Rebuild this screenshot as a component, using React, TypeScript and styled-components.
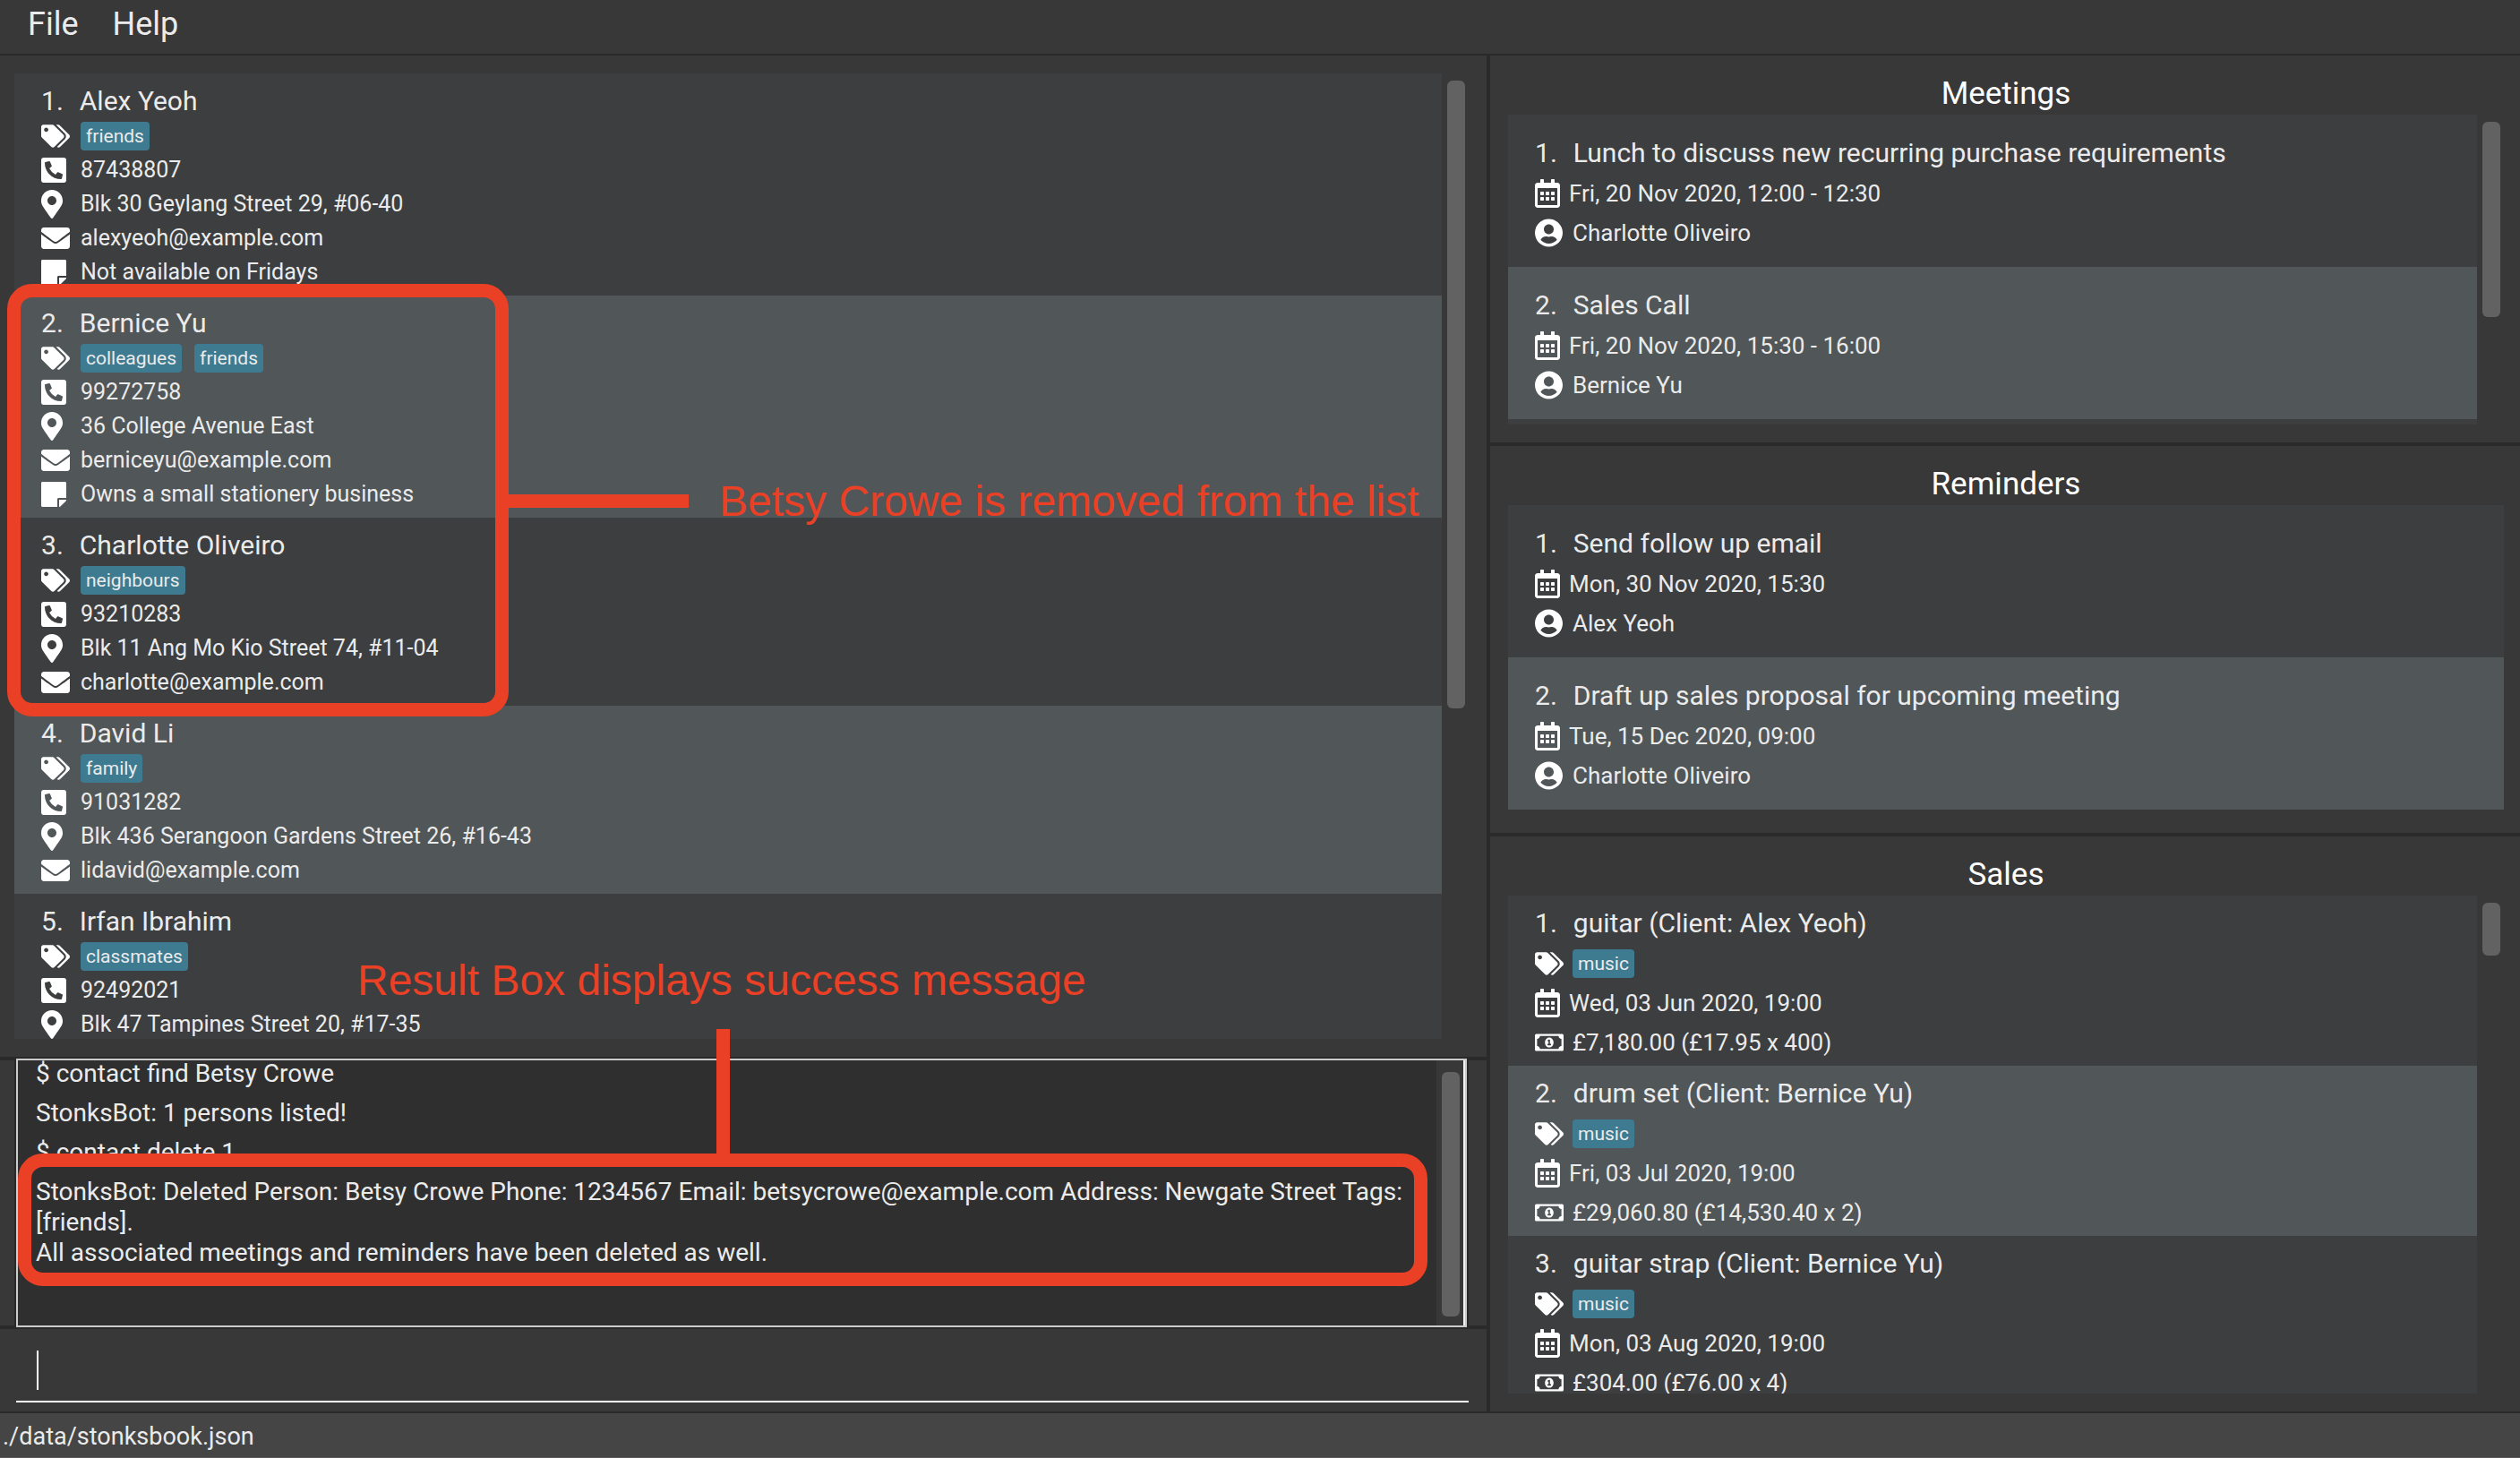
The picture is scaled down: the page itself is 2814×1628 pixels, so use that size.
import React from "react";
import styled, { createGlobalStyle } from "styled-components";
import type { IconType } from "react-icons";
import {
  FaEnvelope,
  FaMapMarkerAlt,
  FaPhoneSquareAlt,
  FaRegCalendarAlt,
  FaRegMoneyBillAlt,
  FaStickyNote,
  FaTags,
  FaUserCircle,
} from "react-icons/fa";

const color = {
  base: "#383838",
  divider: "#2a2a2a",
  cell: "#3c3e3f",
  cellAlt: "#515658",
  tag: "#3e7b91",
  thumb: "#626262",
  console: "#2f2f2f",
  consoleBorder: "#cbcccb",
  status: "#454545",
  text: "#ebebeb",
  note: "#ea4025",
};

const GlobalStyle = createGlobalStyle`
  *, *::before, *::after { box-sizing: border-box; }
  body { margin: 0; background: ${color.base}; }
  h2, p, ul { margin: 0; padding: 0; }
  ul { list-style: none; }
  button, input { font: inherit; color: inherit; }
`;

const Window = styled.div`
  position: relative;
  display: flex;
  flex-direction: column;
  height: 100vh;
  overflow: hidden;
  background: ${color.base};
  color: ${color.text};
  font-family: Roboto, "Liberation Sans", sans-serif;
  font-size: 26px;
`;

const MenuBar = styled.nav`
  display: flex;
  flex: none;
  height: 62px;
  padding: 0 12px 6px;
  border-bottom: 2px solid ${color.divider};
`;

const MenuButton = styled.button`
  padding: 0 19px;
  border: 0;
  background: none;
  font-size: 36px;
  line-height: 54px;
`;

const Workspace = styled.main`
  display: grid;
  flex: 1;
  min-height: 0;
  grid-template-columns: minmax(0, 1660fr) 4px minmax(0, 1150fr);
`;

const Divider = styled.div`
  background: ${color.divider};
`;

const ContactColumn = styled.div`
  display: grid;
  min-height: 0;
  grid-template-rows: minmax(0, 1fr) 4px 296px 4px 92px;
`;

const AgendaColumn = styled.div`
  display: grid;
  min-height: 0;
  grid-template-rows: minmax(0, 432fr) 4px minmax(0, 432fr) 4px minmax(0, 642fr);
`;

const Panel = styled.section<{ $left: number; $right: number }>`
  display: flex;
  flex-direction: column;
  min-height: 0;
  padding: 20px ${(p) => p.$right}px 20px ${(p) => p.$left}px;
`;

const PanelTitle = styled.h2`
  flex: none;
  color: #fff;
  font-size: 35px;
  font-weight: 400;
  line-height: 46px;
  text-align: center;
`;

const ListArea = styled.div`
  display: flex;
  flex: 1;
  min-height: 0;
`;

const List = styled.ul<{ $filled?: boolean }>`
  flex: 1;
  min-width: 0;
  overflow: hidden;
  background: ${(p) => (p.$filled ? color.cell : "transparent")};
`;

const Track = styled.div`
  flex: none;
  width: 30px;
  padding: 8px 4px 8px 6px;
`;

const Thumb = styled.div<{ $size: number }>`
  height: ${(p) => p.$size}%;
  border-radius: 6px;
  background: ${color.thumb};
`;

const Row = styled.li<{ $top: number; $bottom: number }>`
  padding: ${(p) => p.$top}px 20px ${(p) => p.$bottom}px 30px;
  background: ${color.cell};

  &:nth-child(even) {
    background: ${color.cellAlt};
  }
`;

const RowTitle = styled.div<{ $height: number }>`
  display: flex;
  gap: 18px;
  height: ${(p) => p.$height}px;
  font-size: 30px;
  line-height: ${(p) => p.$height}px;
  white-space: nowrap;
`;

const Field = styled.div<{ $height: number; $gap: number; $font: number }>`
  display: flex;
  align-items: center;
  gap: ${(p) => p.$gap}px;
  height: ${(p) => p.$height}px;
  font-size: ${(p) => p.$font}px;
  line-height: ${(p) => p.$height}px;
  white-space: nowrap;
`;

const IconSlot = styled.span<{ $width: number }>`
  display: flex;
  flex: none;
  color: #fff;

  svg {
    width: ${(p) => p.$width}px;
    height: 32px;
  }
`;

const Tags = styled.span`
  display: flex;
  gap: 14px;
`;

const Tag = styled.span`
  padding: 0 6px;
  border-radius: 4px;
  background: ${color.tag};
  font-size: 21px;
  line-height: 32px;
`;

const Console = styled.section`
  position: relative;
  display: flex;
  min-height: 0;
  margin: -2px 22px -2px 18px;
  border: 2px solid ${color.consoleBorder};
  box-shadow: 2px 0 ${color.divider}, -2px 0 ${color.divider};
  background: ${color.console};
`;

const Log = styled.div`
  display: flex;
  flex: 1;
  flex-direction: column;
  justify-content: flex-end;
  gap: 10px;
  min-width: 0;
  padding: 0 20px 64px;
  overflow: hidden;
  font-size: 28px;
  line-height: 34px;
`;

const LogEntry = styled.p`
  flex: none;
  white-space: pre-line;
`;

const ConsoleTrack = styled.div`
  flex: none;
  width: 32px;
  padding: 13px 4px 10px 6px;
  border-right: 2px solid #f2f2f2;
  background: ${color.base};
`;

const CommandArea = styled.form`
  padding: 0 20px 10px 18px;
`;

const CommandBox = styled.div`
  display: flex;
  align-items: center;
  height: 100%;
  padding: 12px 0 0 23px;
  border-bottom: 2px solid #fff;
`;

const Caret = styled.span`
  flex: none;
  width: 2px;
  height: 44px;
  background: #fff;
`;

const CommandInput = styled.input`
  flex: 1;
  min-width: 0;
  height: 44px;
  padding: 0;
  border: 0;
  outline: 0;
  background: none;
  font-size: 28px;
`;

const StatusBar = styled.footer`
  flex: none;
  height: 52px;
  padding: 1px 3px 0;
  border-top: 2px solid ${color.divider};
  border-bottom: 1px solid #5a5758;
  background: ${color.status};
  font-size: 27px;
  line-height: 50px;
`;

const Annotations = styled.div`
  position: absolute;
  inset: 0;
  pointer-events: none;
  color: ${color.note};
  font-family: "Liberation Sans", Arial, sans-serif;
  font-size: 48px;
  line-height: 56px;
  white-space: nowrap;
`;

type Place = { $x: number; $y: number };

const Outline = styled.div<Place & { $w: number; $h: number }>`
  position: absolute;
  left: ${(p) => p.$x}px;
  top: ${(p) => p.$y}px;
  width: ${(p) => p.$w}px;
  height: ${(p) => p.$h}px;
  border: 15px solid ${color.note};
  border-radius: 28px;
`;

const Connector = styled.div<Place & { $w: number; $h: number }>`
  position: absolute;
  left: ${(p) => p.$x}px;
  top: ${(p) => p.$y}px;
  width: ${(p) => p.$w}px;
  height: ${(p) => p.$h}px;
  background: ${color.note};
`;

const Callout = styled.p<Place>`
  position: absolute;
  left: ${(p) => p.$x}px;
  top: ${(p) => p.$y}px;
`;

type Contact = {
  name: string;
  tags: string[];
  phone: string;
  address: string;
  email?: string;
  note?: string;
};

const contacts: Contact[] = [
  {
    name: "Alex Yeoh",
    tags: ["friends"],
    phone: "87438807",
    address: "Blk 30 Geylang Street 29, #06-40",
    email: "alexyeoh@example.com",
    note: "Not available on Fridays",
  },
  {
    name: "Bernice Yu",
    tags: ["colleagues", "friends"],
    phone: "99272758",
    address: "36 College Avenue East",
    email: "berniceyu@example.com",
    note: "Owns a small stationery business",
  },
  {
    name: "Charlotte Oliveiro",
    tags: ["neighbours"],
    phone: "93210283",
    address: "Blk 11 Ang Mo Kio Street 74, #11-04",
    email: "charlotte@example.com",
  },
  {
    name: "David Li",
    tags: ["family"],
    phone: "91031282",
    address: "Blk 436 Serangoon Gardens Street 26, #16-43",
    email: "lidavid@example.com",
  },
  {
    name: "Irfan Ibrahim",
    tags: ["classmates"],
    phone: "92492021",
    address: "Blk 47 Tampines Street 20, #17-35",
  },
];

type Appointment = { title: string; time: string; person: string };

const meetings: Appointment[] = [
  {
    title: "Lunch to discuss new recurring purchase requirements",
    time: "Fri, 20 Nov 2020, 12:00 - 12:30",
    person: "Charlotte Oliveiro",
  },
  { title: "Sales Call", time: "Fri, 20 Nov 2020, 15:30 - 16:00", person: "Bernice Yu" },
];

const reminders: Appointment[] = [
  { title: "Send follow up email", time: "Mon, 30 Nov 2020, 15:30", person: "Alex Yeoh" },
  {
    title: "Draft up sales proposal for upcoming meeting",
    time: "Tue, 15 Dec 2020, 09:00",
    person: "Charlotte Oliveiro",
  },
];

const sales = [
  {
    title: "guitar (Client: Alex Yeoh)",
    tag: "music",
    time: "Wed, 03 Jun 2020, 19:00",
    price: "£7,180.00 (£17.95 x 400)",
  },
  {
    title: "drum set (Client: Bernice Yu)",
    tag: "music",
    time: "Fri, 03 Jul 2020, 19:00",
    price: "£29,060.80 (£14,530.40 x 2)",
  },
  {
    title: "guitar strap (Client: Bernice Yu)",
    tag: "music",
    time: "Mon, 03 Aug 2020, 19:00",
    price: "£304.00 (£76.00 x 4)",
  },
];

const log = [
  "$ contact find Betsy Crowe",
  "StonksBot: 1 persons listed!",
  "$ contact delete 1",
  "StonksBot: Deleted Person: Betsy Crowe Phone: 1234567 Email: betsycrowe@example.com Address: Newgate Street Tags: [friends].\nAll associated meetings and reminders have been deleted as well.",
];

type FieldProps = { icon: IconType; width?: number; children: React.ReactNode };

function ContactField({ icon: Icon, children }: FieldProps) {
  return (
    <Field $height={38} $gap={12} $font={25}>
      <IconSlot $width={32}>
        <Icon preserveAspectRatio="xMinYMid meet" />
      </IconSlot>
      {children}
    </Field>
  );
}

function AgendaField({ icon: Icon, width = 32, children }: FieldProps) {
  return (
    <Field $height={44} $gap={10} $font={26}>
      <IconSlot $width={width}>
        <Icon preserveAspectRatio="xMinYMid meet" />
      </IconSlot>
      {children}
    </Field>
  );
}

function ContactRow({ index, contact }: { index: number; contact: Contact }) {
  return (
    <Row $top={11} $bottom={7}>
      <RowTitle $height={40}>
        <span>{index}.</span>
        <span>{contact.name}</span>
      </RowTitle>
      <ContactField icon={FaTags}>
        <Tags>
          {contact.tags.map((tag) => (
            <Tag key={tag}>{tag}</Tag>
          ))}
        </Tags>
      </ContactField>
      <ContactField icon={FaPhoneSquareAlt}>{contact.phone}</ContactField>
      <ContactField icon={FaMapMarkerAlt}>{contact.address}</ContactField>
      {contact.email && <ContactField icon={FaEnvelope}>{contact.email}</ContactField>}
      {contact.note && <ContactField icon={FaStickyNote}>{contact.note}</ContactField>}
    </Row>
  );
}

function AppointmentRow({ index, item }: { index: number; item: Appointment }) {
  return (
    <Row $top={20} $bottom={16}>
      <RowTitle $height={46}>
        <span>{index}.</span>
        <span>{item.title}</span>
      </RowTitle>
      <AgendaField icon={FaRegCalendarAlt} width={28}>
        {item.time}
      </AgendaField>
      <AgendaField icon={FaUserCircle}>{item.person}</AgendaField>
    </Row>
  );
}

function AgendaPanel({
  title,
  thumb,
  filled,
  children,
}: {
  title: string;
  thumb?: number;
  filled?: boolean;
  children: React.ReactNode;
}) {
  return (
    <Panel $left={20} $right={18}>
      <PanelTitle>{title}</PanelTitle>
      <ListArea>
        <List $filled={filled}>{children}</List>
        {thumb && (
          <Track>
            <Thumb $size={thumb} />
          </Track>
        )}
      </ListArea>
    </Panel>
  );
}

export default function App() {
  return (
    <Window>
      <GlobalStyle />
      <MenuBar>
        <MenuButton type="button">File</MenuButton>
        <MenuButton type="button">Help</MenuButton>
      </MenuBar>

      <Workspace>
        <ContactColumn>
          <Panel $left={16} $right={20}>
            <ListArea>
              <List>
                {contacts.map((contact, i) => (
                  <ContactRow key={contact.name} index={i + 1} contact={contact} />
                ))}
              </List>
              <Track>
                <Thumb $size={66} />
              </Track>
            </ListArea>
          </Panel>
          <Divider />
          <Console>
            <Log>
              {log.map((entry) => (
                <LogEntry key={entry}>{entry}</LogEntry>
              ))}
            </Log>
            <ConsoleTrack>
              <Thumb $size={100} />
            </ConsoleTrack>
          </Console>
          <Divider />
          <CommandArea onSubmit={(event) => event.preventDefault()}>
            <CommandBox>
              <Caret />
              <CommandInput type="text" aria-label="Command" />
            </CommandBox>
          </CommandArea>
        </ContactColumn>

        <Divider />

        <AgendaColumn>
          <AgendaPanel title="Meetings" thumb={66} filled>
            {meetings.map((item, i) => (
              <AppointmentRow key={item.title} index={i + 1} item={item} />
            ))}
          </AgendaPanel>
          <Divider />
          <AgendaPanel title="Reminders">
            {reminders.map((item, i) => (
              <AppointmentRow key={item.title} index={i + 1} item={item} />
            ))}
          </AgendaPanel>
          <Divider />
          <AgendaPanel title="Sales" thumb={11} filled>
            {sales.map((sale, i) => (
              <Row key={sale.title} $top={8} $bottom={4}>
                <RowTitle $height={46}>
                  <span>{i + 1}.</span>
                  <span>{sale.title}</span>
                </RowTitle>
                <AgendaField icon={FaTags}>
                  <Tags>
                    <Tag>{sale.tag}</Tag>
                  </Tags>
                </AgendaField>
                <AgendaField icon={FaRegCalendarAlt} width={28}>
                  {sale.time}
                </AgendaField>
                <AgendaField icon={FaRegMoneyBillAlt}>{sale.price}</AgendaField>
              </Row>
            ))}
          </AgendaPanel>
        </AgendaColumn>
      </Workspace>

      <StatusBar>./data/stonksbook.json</StatusBar>

      <Annotations>
        <Outline $x={8} $y={317} $w={560} $h={483} />
        <Connector $x={568} $y={552} $w={201} $h={15} />
        <Callout $x={803} $y={532}>
          Betsy Crowe is removed from the list
        </Callout>
        <Callout $x={399} $y={1067}>
          Result Box displays success message
        </Callout>
        <Connector $x={800} $y={1149} $w={15} $h={140} />
        <Outline $x={20} $y={1288} $w={1574} $h={148} />
      </Annotations>
    </Window>
  );
}
